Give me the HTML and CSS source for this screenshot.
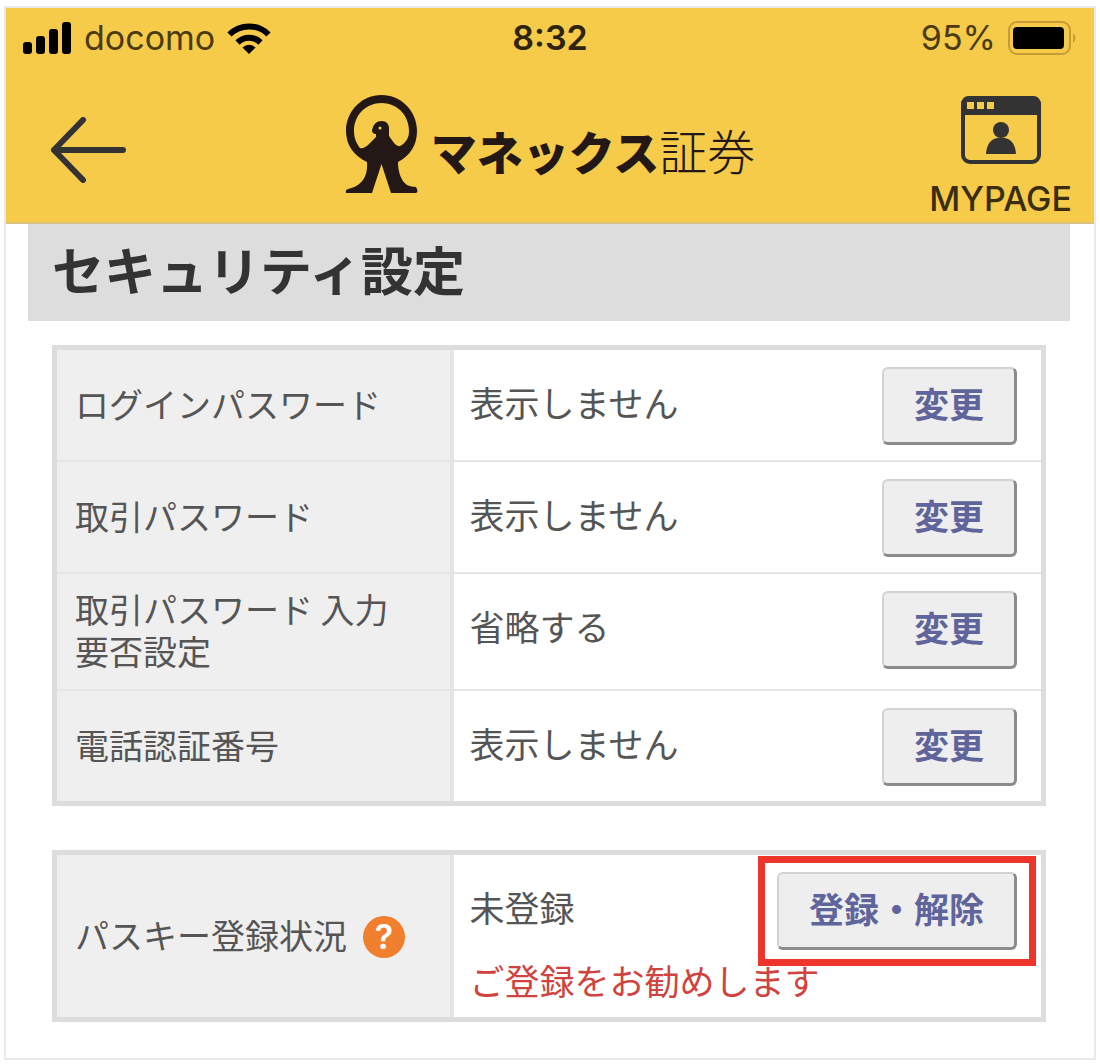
FILE: index.html
```html
<!DOCTYPE html>
<html lang="ja">
<head>
<meta charset="UTF-8" />
<meta name="viewport" content="width=device-width, initial-scale=1" />
<title>セキュリティ設定</title>
<link rel="stylesheet" href="styles.css">
</head>
<body>
<div class="screen">
  <header class="header">
    <div class="status-bar">
      <div class="carrier">
        <svg class="signal" viewBox="0 0 50 32" aria-hidden="true">
          <rect x="1" y="20" width="9" height="12" rx="3"/>
          <rect x="14" y="14" width="9" height="18" rx="3"/>
          <rect x="27" y="7" width="9" height="25" rx="3"/>
          <rect x="40" y="0" width="9" height="32" rx="3"/>
        </svg>
        <span>docomo</span>
        <svg class="wifi" viewBox="0 0 44 32" aria-hidden="true">
          <path d="M2.500 12.500 A27.500 27.500 0 0 1 41.500 12.500" fill="none" stroke="#000" stroke-width="6"/>
          <path d="M10.500 20.500 A16.300 16.300 0 0 1 33.500 20.500" fill="none" stroke="#000" stroke-width="6"/>
          <path d="M22 32 L15.500 25.500 A9.200 9.200 0 0 1 28.500 25.500 Z"/>
        </svg>
      </div>
      <time class="clock">8:32</time>
      <div class="battery">
        <span>95%</span>
        <svg class="battery-icon" viewBox="0 0 70 34" aria-hidden="true">
          <rect x="1" y="1" width="61" height="32" rx="8" fill="none" stroke="#c59c36" stroke-width="2"/>
          <rect x="5" y="6" width="51" height="22" rx="4"/>
          <path d="M65 12 Q70 17 65 22 Z" fill="#c59c36"/>
        </svg>
      </div>
    </div>

    <nav class="nav">
      <a href="#" class="back" aria-label="戻る">
        <svg viewBox="0 0 76 66" aria-hidden="true">
          <path d="M33 3 L4 33 L33 63 M4 33 H73" fill="none" stroke="#333" stroke-width="6" stroke-linecap="round" stroke-linejoin="round"/>
        </svg>
      </a>
      <a href="#" class="brand">
        <svg class="brand-mark" viewBox="0 0 74 100" aria-hidden="true">
          <path fill="#231815" d="M36.500 0 C56 0 72 16 72 36 C72 50 65 61 53 67 C53 77 56 86 62 90 Q66 92 71 92 Q74 97 71 98 H46 L36.500 69 L27 98 H1 Q0 95 3 94 C18 91 23 80 22 67 C9 61 1 50 1 36 C1 16 17 0 36.500 0 Z M36.500 8 C21 8 9 20 9 36 C9 44 12 49 15 53 C17 54 22 52 25 48 L31 42 L31 39 Q27 39 27 35 Q29 26 36.500 26 Q44 26 44 34 V41 L49 48 Q53 53 57 50 C62 46 64 42 64 36 C64 20 52 8 36.500 8 Z"/>
          <circle cx="35" cy="33" r="1.500" fill="#f6cb4a"/>
        </svg>
        <span class="brand-name">マネックス<span class="brand-suffix">証券</span></span>
      </a>
      <a href="#" class="mypage">
        <svg viewBox="0 0 82 70" aria-hidden="true">
          <rect x="3" y="3" width="76" height="64" rx="7" fill="none" stroke="#333" stroke-width="4"/>
          <path fill="#333" d="M1 20 V9 Q2 1 9 1 H73 Q80 1 81 9 V20 Z"/>
          <path fill="#f6cb4a" d="M7 7 H14 V14 H7 Z M17 7 H24 V14 H17 Z M27 7 H34 V14 H27 Z"/>
          <circle cx="41" cy="35" r="8" fill="#333"/>
          <path fill="#333" d="M26 59 Q27 45 37 43 H45 Q55 45 56 59 Z"/>
        </svg>
        <span>MYPAGE</span>
      </a>
    </nav>
  </header>

  <main class="content">
    <h1 class="page-title">セキュリティ設定</h1>

    <table class="settings">
      <tr>
        <th scope="row">ログインパスワード</th>
        <td><div class="row"><span>表示しません</span><button class="btn" type="button">変更</button></div></td>
      </tr>
      <tr>
        <th scope="row">取引パスワード</th>
        <td><div class="row"><span>表示しません</span><button class="btn" type="button">変更</button></div></td>
      </tr>
      <tr>
        <th scope="row">取引パスワード 入力要否設定</th>
        <td><div class="row"><span>省略する</span><button class="btn" type="button">変更</button></div></td>
      </tr>
      <tr>
        <th scope="row">電話認証番号</th>
        <td><div class="row"><span>表示しません</span><button class="btn" type="button">変更</button></div></td>
      </tr>
    </table>

    <table class="settings">
      <tr>
        <th scope="row">
          <div class="label">
            <span>パスキー登録状況</span>
            <button class="help" type="button" aria-label="ヘルプ">?</button>
          </div>
        </th>
        <td>
          <div class="row">
            <span>未登録</span>
            <div class="highlight"><button class="btn" type="button">登録・解除</button></div>
          </div>
          <p class="notice">ご登録をお勧めします</p>
        </td>
      </tr>
    </table>
  </main>
</div>
</body>
</html>
```
FILE: styles.css
```css
:root {
  --brand-yellow: #f6cb4a;
  --line: #dddddd;
  --line-light: #e5e5e5;
  --label-bg: #efefef;
  --text: #555555;
  --dark: #333333;
  --link: #5f659b;
  --notice: #cf4440;
  --font-ja: "Noto Sans CJK JP", sans-serif;
  --font-ui: Inter, "Noto Sans CJK JP", sans-serif;
}

* {
  box-sizing: border-box;
}

body {
  margin: 0;
  padding: 6px 4px 4px;
  background: #fff;
  color: var(--text);
  font-family: var(--font-ja);
  font-size: 34px;
  line-height: 42px;
}

a {
  color: inherit;
  text-decoration: none;
}

svg {
  display: block;
}

.screen {
  border: 2px solid #e9e9e9;
}

.header {
  background: var(--brand-yellow);
  border-bottom: 2px solid #d9c27c;
  font-family: var(--font-ui);
}

/* status bar */
.status-bar {
  display: grid;
  grid-template-columns: 1fr auto 1fr;
  align-items: center;
  padding: 10px 16px;
  line-height: 40px;
  color: #4b3a12;
}

.carrier,
.battery {
  display: flex;
  align-items: center;
  gap: 12px;
}

.battery {
  justify-content: flex-end;
}

.signal {
  width: 50px;
  height: 32px;
}

.wifi {
  width: 44px;
  height: 32px;
}

.battery-icon {
  width: 70px;
  height: 34px;
}

.clock {
  font-weight: 600;
  color: #2e240c;
}

/* navigation */
.nav {
  display: grid;
  grid-template-columns: 1fr auto 1fr;
  align-items: start;
  padding: 27px 22px 3px;
}

.back {
  padding: 22px 0 0 22px;
}

.back svg {
  width: 76px;
  height: 66px;
}

.brand {
  display: flex;
  align-items: center;
  gap: 12px;
  color: #231815;
}

.brand-mark {
  width: 74px;
  height: 100px;
}

.brand-name {
  padding-top: 8px;
  font-family: var(--font-ja);
  font-size: 46px;
  font-weight: 900;
}

.brand-suffix {
  font-size: 48px;
  font-weight: 300;
}

.mypage {
  justify-self: end;
  display: flex;
  flex-direction: column;
  align-items: center;
  gap: 14px;
  font-weight: 500;
  line-height: 40px;
  color: #3a2d12;
}

.mypage svg {
  width: 82px;
  height: 70px;
}

/* settings */
.content {
  padding: 0 24px 36px 22px;
}

.page-title {
  margin: 0 0 24px;
  padding: 19px 24px 26px;
  background: var(--line);
  color: var(--dark);
  font-size: 52px;
  font-weight: 700;
  line-height: 52px;
}

.settings {
  width: calc(100% - 48px);
  margin: 0 24px 44px;
  border: 5px solid var(--line);
  border-collapse: separate;
  border-spacing: 0;
  table-layout: fixed;
}

.settings:last-child {
  margin-bottom: 0;
}

.settings th {
  width: 40.3%;
  padding: 14px 36px 17px 18px;
  border-right: 4px solid var(--line-light);
  background: var(--label-bg);
  font-weight: 400;
  text-align: left;
}

.settings td {
  padding: 17px 24px 15px 16px;
  font-size: 35px;
  vertical-align: top;
}

.settings tr + tr th,
.settings tr + tr td {
  border-top: 2px solid var(--line-light);
}

.row {
  display: flex;
  align-items: center;
  justify-content: space-between;
}

.row > span {
  padding-bottom: 8px;
}

.label {
  display: flex;
  align-items: center;
  gap: 16px;
  white-space: nowrap;
}

.btn {
  padding: 14px 30px 19px;
  border: 2px solid #d2d2d2;
  border-right: 3px solid #8b8b8b;
  border-bottom: 3px solid #8b8b8b;
  border-radius: 6px;
  background: #eeeeee;
  color: var(--link);
  font-family: inherit;
  font-size: 35px;
  font-weight: 700;
  line-height: 40px;
  cursor: pointer;
}

.highlight {
  position: relative;
}

.highlight::after {
  content: "";
  position: absolute;
  inset: -16px -19px;
  border: 7px solid #ee352b;
  pointer-events: none;
}

.help {
  width: 42px;
  height: 42px;
  margin-top: 4px;
  padding: 0;
  border: 0;
  border-radius: 50%;
  background: #f07f2e;
  color: #fff;
  font-family: var(--font-ui);
  font-size: 34px;
  font-weight: 600;
  line-height: 42px;
}

.notice {
  margin: 8px 0 0;
  color: var(--notice);
  line-height: 44px;
}
```
